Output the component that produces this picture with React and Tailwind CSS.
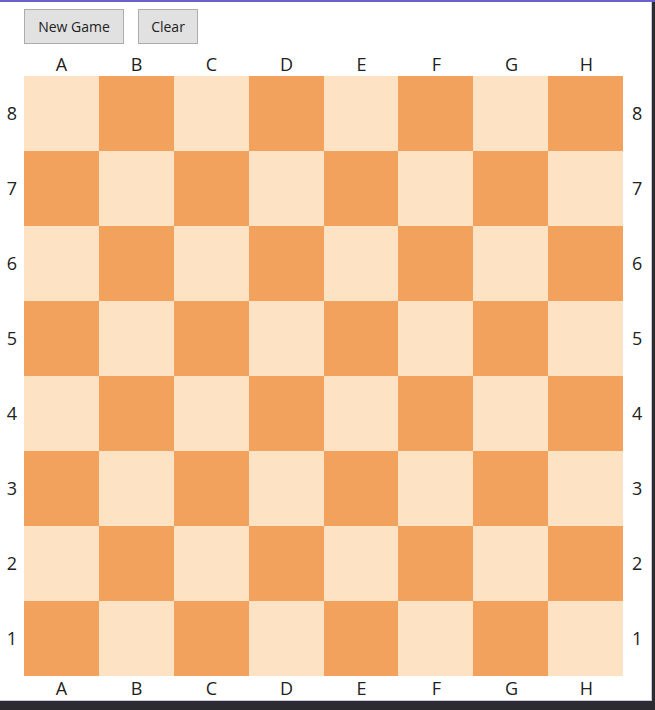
import React from "react";

const FILES = ["A", "B", "C", "D", "E", "F", "G", "H"];
const RANKS = [8, 7, 6, 5, 4, 3, 2, 1];

function FileLabels() {
  return (
    <div className="flex pl-[24px]">
      {FILES.map((f) => (
        <div key={f} className="w-[75px] text-center text-[18px] leading-[24px] text-[#222]">
          {f}
        </div>
      ))}
    </div>
  );
}

export default function App() {
  return (
    <div
      className="w-[655px] h-[710px] bg-[#2c2b31] flex flex-col"
      style={{ fontFamily: '"Open Sans", "Noto Sans", sans-serif' }}
    >
      {/* window top edge */}
      <div className="h-[2px] bg-[#6b62c9]" />

      <div className="w-[652px] h-[699px] bg-white border-r border-b border-[#c9c5e6]">
        {/* toolbar */}
        <div className="flex gap-[14px] pl-[24px] pt-[7px]">
          <button className="w-[100px] h-[35px] bg-[#e1e1e1] border border-[#adadad] text-[14px] text-[#222]">
            New Game
          </button>
          <button className="w-[60px] h-[35px] bg-[#e1e1e1] border border-[#adadad] text-[14px] text-[#222]">
            Clear
          </button>
        </div>

        {/* top file labels */}
        <div className="h-[32px] flex items-end">
          <FileLabels />
        </div>

        {/* board with rank labels */}
        <div className="flex">
          <div className="w-[24px] flex flex-col">
            {RANKS.map((r) => (
              <div key={r} className="h-[75px] flex items-center justify-center text-[18px] text-[#222]">
                {r}
              </div>
            ))}
          </div>

          <div className="grid grid-cols-8 w-[600px] h-[600px]">
            {RANKS.map((r, ri) =>
              FILES.map((f, fi) => (
                <div
                  key={f + r}
                  className={(ri + fi) % 2 === 0 ? "bg-[#fde3c4]" : "bg-[#f3a25e]"}
                />
              ))
            )}
          </div>

          <div className="w-[28px] flex flex-col">
            {RANKS.map((r) => (
              <div key={r} className="h-[75px] flex items-center justify-center text-[18px] text-[#222]">
                {r}
              </div>
            ))}
          </div>
        </div>

        {/* bottom file labels */}
        <FileLabels />
      </div>
    </div>
  );
}
